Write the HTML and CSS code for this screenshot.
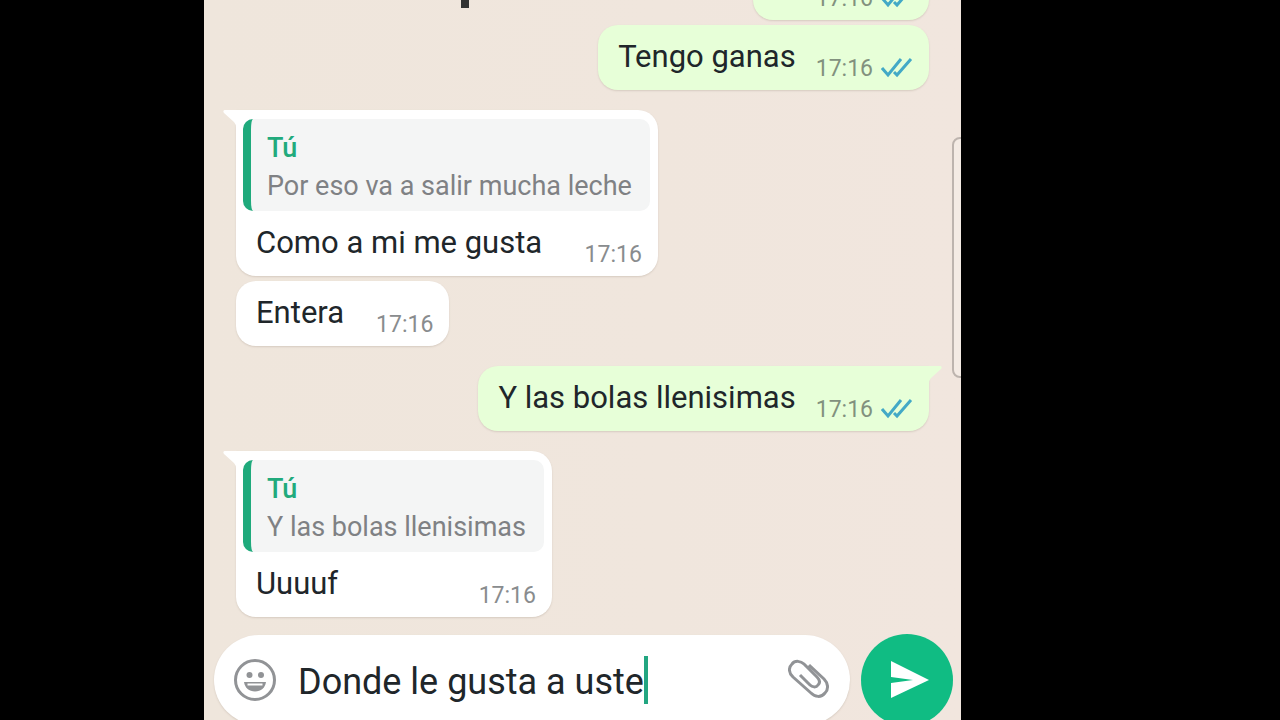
FILE: index.html
```html
<!DOCTYPE html>
<html lang="es">
<head>
<meta charset="utf-8">
<title>Chat</title>
<link rel="stylesheet" href="styles.css">
</head>
<body>
<svg class="defs" aria-hidden="true">
  <symbol id="ticks" viewBox="0 0 32 24">
    <path d="M1 12L7 19L20 3M13 16L16 19L30 3" fill="none" stroke="currentColor" stroke-width="3"/>
  </symbol>
  <symbol id="tail" viewBox="0 0 14 18">
    <path d="M14 0H2C0 0 0 2 1 3L11 12Q13 14 13 18H14Z" fill="currentColor"/>
  </symbol>
</svg>
<main class="stage">
  <section class="phone">
    <span class="descender"></span>
    <span class="edge-panel"></span>
    <div class="messages">
      <article class="bubble out short">
        <div class="row"><time>17:16</time><svg class="ticks"><use href="#ticks"/></svg></div>
      </article>
      <article class="bubble out">
        <div class="row"><p>Tengo ganas</p><time>17:16</time><svg class="ticks"><use href="#ticks"/></svg></div>
      </article>
      <article class="bubble in first">
        <svg class="tail"><use href="#tail"/></svg>
        <blockquote><strong>Tú</strong><span>Por eso va a salir mucha leche</span></blockquote>
        <div class="row"><p>Como a mi me gusta</p><time>17:16</time></div>
      </article>
      <article class="bubble in">
        <div class="row"><p>Entera</p><time>17:16</time></div>
      </article>
      <article class="bubble out first">
        <svg class="tail"><use href="#tail"/></svg>
        <div class="row"><p>Y las bolas llenisimas</p><time>17:16</time><svg class="ticks"><use href="#ticks"/></svg></div>
      </article>
      <article class="bubble in first">
        <svg class="tail"><use href="#tail"/></svg>
        <blockquote><strong>Tú</strong><span>Y las bolas llenisimas</span></blockquote>
        <div class="row"><p>Uuuuf</p><time>17:16</time></div>
      </article>
    </div>
    <form class="composer">
      <div class="field">
        <button type="button" class="icon" aria-label="Emoji">
          <svg viewBox="0 0 42 42">
            <circle cx="21" cy="21" r="19.5" fill="none" stroke="currentColor" stroke-width="3"/>
            <circle cx="15.500" cy="16" r="3" fill="currentColor"/>
            <circle cx="27" cy="16" r="3" fill="currentColor"/>
            <path d="M10 23H32C31 29 27 32.500 21 32.500S11 29 10 23Z" fill="currentColor"/>
            <path d="M13.500 25.500H28.500" stroke="#fff" stroke-width="2"/>
          </svg>
        </button>
        <input type="text" aria-label="Mensaje" value="Donde le gusta a uste">
        <span class="caret"></span>
        <button type="button" class="icon clip" aria-label="Adjuntar">
          <svg viewBox="0 0 42 42">
            <path d="M21 6L36 20C40 24 41 30 37 34C33 39 27 38 23 34L5 18C1 14 0 9 4 5C7 1 13 2 16 5L29 18C32 21 32 24 30 26C28 29 24 28 22 26L12 16" fill="none" stroke="currentColor" stroke-width="3" stroke-linejoin="round"/>
          </svg>
        </button>
      </div>
      <button type="submit" class="send" aria-label="Enviar">
        <svg viewBox="0 0 38 38"><path d="M0 0L38 19L0 37V22L22 19L0 16Z" fill="currentColor"/></svg>
      </button>
    </form>
  </section>
</main>
</body>
</html>
```
FILE: styles.css
```css
* { box-sizing: border-box; }
body {
  margin: 0;
  background: #000;
  font-family: Roboto, sans-serif;
  color: #20262a;
}
.defs { position: absolute; width: 0; height: 0; }
.stage {
  display: grid;
  grid-template-columns: 204fr 757fr 319fr;
  height: 100vh;
  overflow: hidden;
}
.phone {
  grid-column: 2;
  position: relative;
  display: flex;
  flex-direction: column;
  justify-content: flex-end;
  min-height: 0;
  overflow: hidden;
  background: linear-gradient(90deg, #efe6dc, #f0e6dd 60%, #f1e6de);
}
.descender {
  position: absolute;
  top: 0;
  left: 34%;
  width: 8px;
  height: 8px;
  background: #333;
}
.edge-panel {
  position: absolute;
  top: 137px;
  right: -8px;
  width: 17px;
  height: 241px;
  border: 2px solid #bdb4ae;
  border-radius: 8px;
  background: #f4ebe4;
}
.messages {
  display: flex;
  flex-direction: column;
  align-items: flex-start;
  gap: 5px;
  padding: 0 32px;
}
.bubble {
  position: relative;
  border-radius: 20px;
  box-shadow: 0 1px 2px #d6cbc0;
}
.in { background: #fff; color: #fff; }
.out { align-self: flex-end; background: #e7ffd8; color: #e7ffd8; }
.first { margin-top: 15px; }
.in.first { padding-top: 9px; border-top-left-radius: 0; }
.out.first { border-top-right-radius: 0; }
.short { min-width: 176px; }
.tail { position: absolute; top: 0; width: 14px; height: 18px; }
.in .tail { left: -13px; }
.out .tail { right: -13px; transform: scaleX(-1); }
blockquote {
  display: flex;
  flex-direction: column;
  margin: 0 8px 0 7px;
  padding: 10px 18px 6px 16px;
  border-left: 8px solid #1faa7c;
  border-radius: 10px;
  background: #f4f5f5;
  color: #7f8184;
  font-size: 27px;
  line-height: 38px;
}
blockquote strong { color: #21aa7c; font-weight: 500; }
.row {
  display: flex;
  align-items: flex-end;
  height: 65px;
  padding: 0 16px 0 20px;
}
.row p {
  margin: 0;
  padding-bottom: 13px;
  color: #20262a;
  font-size: 31px;
  line-height: 40px;
}
.row time {
  margin-left: auto;
  padding: 0 0 7px 32px;
  color: #898c8e;
  font-size: 23px;
  line-height: 28px;
}
.out time { padding-left: 20px; color: #82917e; }
.ticks { width: 32px; height: 24px; margin: 0 0 10px 8px; color: #43a9c6; }
.composer {
  display: flex;
  align-items: center;
  gap: 11px;
  margin: 17px 8px -6px 10px;
}
.field {
  flex: 1;
  display: flex;
  align-items: center;
  padding: 20px;
  border-radius: 45px;
  background: #fff;
  box-shadow: 0 1px 2px #d6cbc0;
}
button { border: 0; padding: 0; background: none; }
.icon { width: 42px; height: 42px; color: #919396; }
.icon svg { display: block; width: 42px; height: 42px; }
.clip { margin-left: auto; }
input {
  field-sizing: content;
  border: 0;
  outline: 0;
  padding: 4px 0 0;
  margin-left: 22px;
  background: none;
  color: #20262a;
  font: 36px/46px Roboto, sans-serif;
}
.caret { width: 4px; height: 48px; background: #22a681; }
.send {
  display: flex;
  align-items: center;
  justify-content: center;
  width: 92px;
  height: 92px;
  padding-left: 6px;
  border-radius: 50%;
  background: #10bc83;
  color: #fff;
}
.send svg { width: 38px; height: 38px; }
```
